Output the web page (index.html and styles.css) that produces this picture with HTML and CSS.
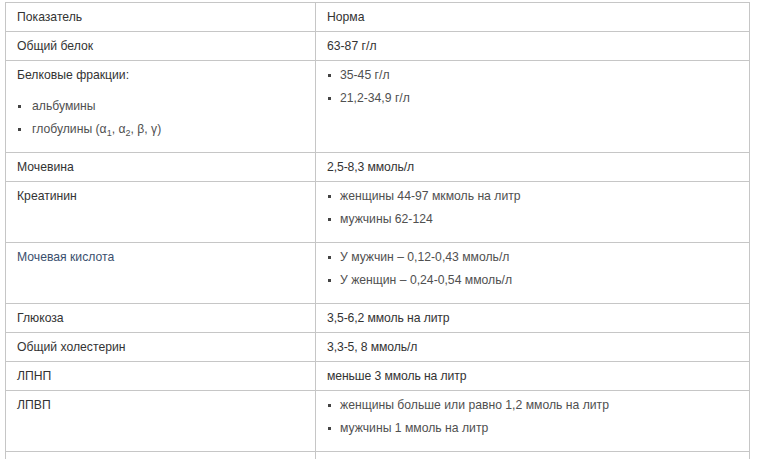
FILE: index.html
```html
<!DOCTYPE html>
<html lang="ru">
<head>
<meta charset="utf-8">
<link rel="stylesheet" href="styles.css">
</head>
<body>
<table class="norms">
  <tr><td class="c1">Показатель</td><td>Норма</td></tr>
  <tr><td class="c1">Общий белок</td><td>63-87 г/л</td></tr>
  <tr>
    <td class="c1">
      <p class="lead">Белковые фракции:</p>
      <ul class="dots tail">
        <li>альбумины</li>
        <li>глобулины (α<sub>1</sub>, α<sub>2</sub>, β, γ)</li>
      </ul>
    </td>
    <td>
      <ul class="dots">
        <li>35-45 г/л</li>
        <li>21,2-34,9 г/л</li>
      </ul>
    </td>
  </tr>
  <tr><td class="c1">Мочевина</td><td class="tight">2,5-8,3 ммоль/л</td></tr>
  <tr>
    <td class="c1">Креатинин</td>
    <td>
      <ul class="dots">
        <li>женщины 44-97 мкмоль на литр</li>
        <li>мужчины 62-124</li>
      </ul>
    </td>
  </tr>
  <tr>
    <td class="c1 link">Мочевая кислота</td>
    <td>
      <ul class="dots">
        <li>У мужчин – 0,12-0,43 ммоль/л</li>
        <li>У женщин – 0,24-0,54 ммоль/л</li>
      </ul>
    </td>
  </tr>
  <tr><td class="c1">Глюкоза</td><td class="tight">3,5-6,2 ммоль на литр</td></tr>
  <tr><td class="c1">Общий холестерин</td><td class="tight">3,3-5, 8 ммоль/л</td></tr>
  <tr><td class="c1">ЛПНП</td><td class="tight">меньше 3 ммоль на литр</td></tr>
  <tr>
    <td class="c1">ЛПВП</td>
    <td>
      <ul class="dots">
        <li>женщины больше или равно 1,2 ммоль на литр</li>
        <li>мужчины 1 ммоль на литр</li>
      </ul>
    </td>
  </tr>
  <tr><td class="c1">&nbsp;</td><td>&nbsp;</td></tr>
</table>
</body>
</html>
```
FILE: styles.css
```css
html {
  height: 100%;
  overflow: hidden;
}
html, body {
  margin: 0;
  background: #fff;
}
body {
  padding: 2px 0 0 5px;
  font-family: "Liberation Sans", Arial, sans-serif;
  font-size: 12.2px;
  color: #333;
}
.norms {
  border-collapse: collapse;
  width: 745px;
  table-layout: fixed;
}
.norms td {
  border: 1px solid #c6c6c6;
  padding: 6px 10px 6px 11px;
  line-height: 16px;
  vertical-align: top;
}
.norms td.c1 {
  width: 288px;
}
.tight {
  letter-spacing: -0.1px;
}
.link {
  color: #3b506e;
}
.lead {
  margin: 0 0 15px;
}
.dots {
  list-style: none;
  margin: 0;
  padding: 0 0 2px;
}
.dots li {
  position: relative;
  padding-left: 13px;
  margin-bottom: 7px;
  color: #505050;
}
.dots li::before {
  content: "";
  position: absolute;
  left: 1px;
  top: 7px;
  width: 3px;
  height: 3px;
  background: #444;
}
.dots.tail {
  padding-bottom: 2px;
}
.dots.tail li {
  padding-left: 15px;
}
sub {
  font-size: 9px;
  line-height: 0;
  vertical-align: -3px;
}
```
